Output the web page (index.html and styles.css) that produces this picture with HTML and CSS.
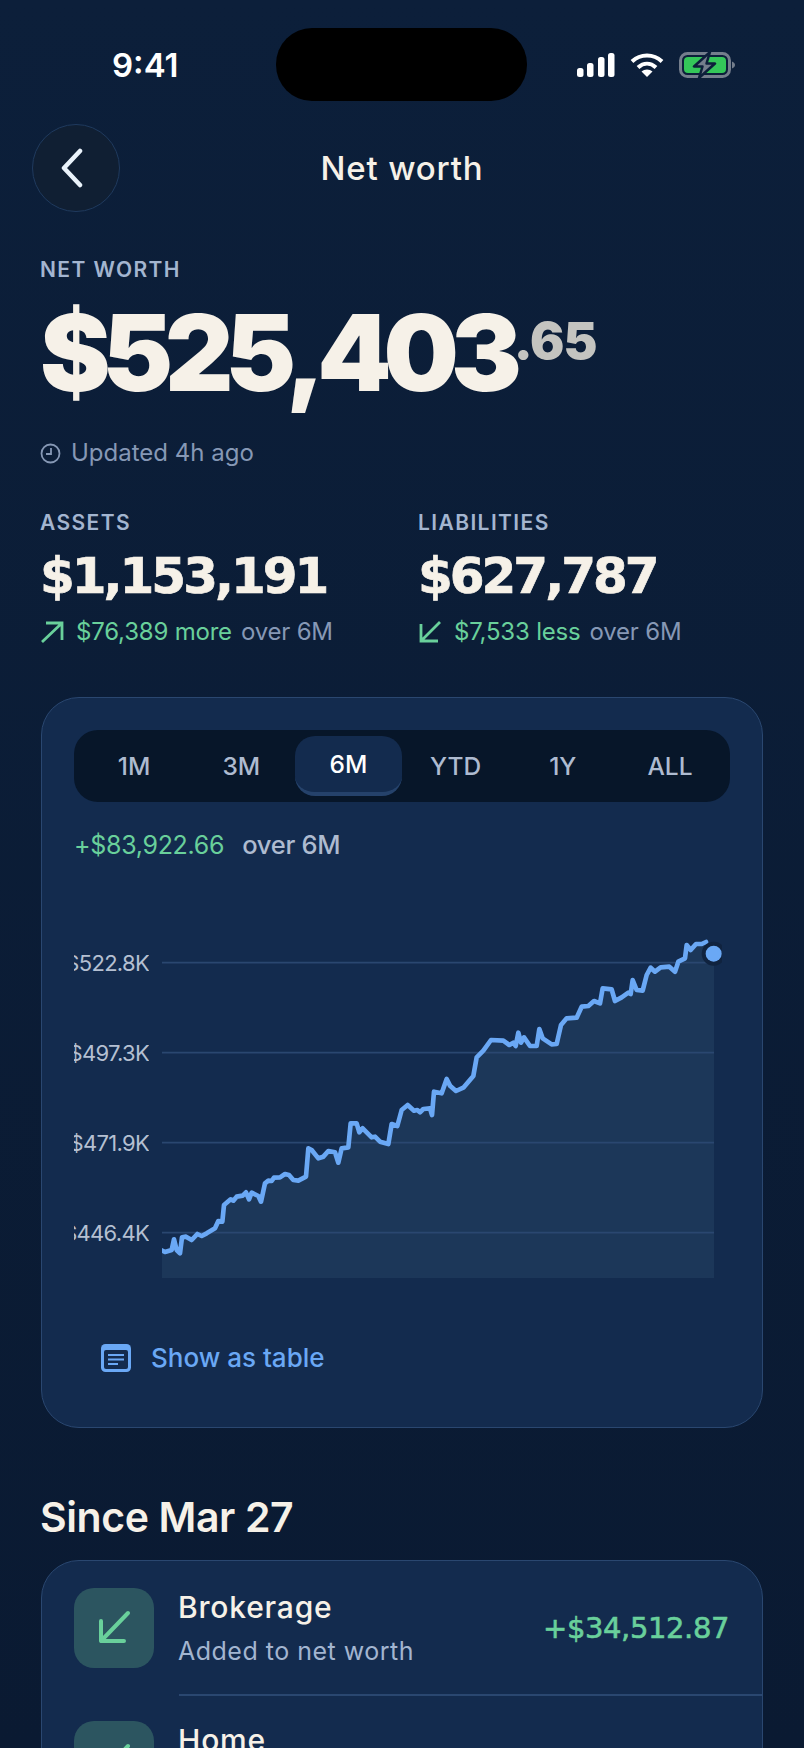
FILE: index.html
```html
<!DOCTYPE html>
<html lang="en">
<head>
    <meta charset="UTF-8">
    <meta name="viewport" content="width=device-width, initial-scale=1.0">
    <title>Net worth</title>
    <link rel="stylesheet" href="styles.css">
</head>
<body>
    <div class="status-bar">
        <div class="status-time">9:41</div>
        <div class="island"></div>
        <div class="status-icons">
            <svg width="38" height="24" viewBox="0 0 38 24">
                <rect x="0" y="15" width="6.5" height="9" rx="2.5" fill="#fff"/>
                <rect x="10" y="10" width="6.5" height="14" rx="2.5" fill="#fff"/>
                <rect x="21" y="4" width="6.5" height="20" rx="2.5" fill="#fff"/>
                <rect x="31" y="0" width="6.5" height="24" rx="2.5" fill="#fff"/>
            </svg>
            <svg width="34" height="24" viewBox="0 0 34 24">
                <path d="M2 8.5C10.500 0.500 23.500 0.500 32 8.500" fill="none" stroke="#fff" stroke-width="4"/>
                <path d="M8 14.500C13.500 9.500 20.500 9.500 26 14.500" fill="none" stroke="#fff" stroke-width="4"/>
                <path d="M17 24L11.500 18.500C14.500 15.800 19.500 15.800 22.500 18.500Z" fill="#fff"/>
            </svg>
            <svg width="56" height="26" viewBox="0 0 56 26">
                <rect x="1.500" y="1.500" width="49" height="23" rx="7" fill="none" stroke="#747e8c" stroke-width="3"/>
                <rect x="5" y="5" width="42" height="16" rx="4" fill="#34c759"/>
                <path d="M53 9.500c2 .8 3 2 3 3.500s-1 2.700-3 3.500z" fill="#747e8c"/>
                <path d="M31 0L15 14.500h8.500L20 26l16-14.500h-8.500z" fill="#747e8c" stroke="#0c1f3a" stroke-width="2.500" stroke-linejoin="round"/>
            </svg>
        </div>
    </div>

    <header class="nav">
        <button class="back-btn">
            <svg width="26" height="40" viewBox="0 0 26 40">
                <path d="M21 3L5 20l16 17" fill="none" stroke="#eaf3fb" stroke-width="4.500" stroke-linecap="round" stroke-linejoin="round"/>
            </svg>
        </button>
        <div class="nav-title">Net worth</div>
    </header>

    <section class="summary">
        <div class="label">NET WORTH</div>
        <div class="total">$525,403<span class="cents">.65</span></div>
        <div class="updated">
            <svg width="21" height="21" viewBox="0 0 21 21">
                <circle cx="10.500" cy="10.500" r="9" fill="none" stroke="#8698b5" stroke-width="1.800"/>
                <path d="M11 5v6H6" fill="none" stroke="#8698b5" stroke-width="1.800"/>
            </svg>
            Updated 4h ago
        </div>
        <div class="split">
            <div class="split-col">
                <div class="label">ASSETS</div>
                <div class="split-value">$1,153,191</div>
                <div class="delta">
                    <svg width="24" height="22" viewBox="0 0 24 22">
                        <path d="M2 21L22 2M6 2h16v17" fill="none" stroke="#69d09b" stroke-width="2.800"/>
                    </svg>
                    <span class="pos">$76,389 more</span>
                    <span class="muted">over 6M</span>
                </div>
            </div>
            <div class="split-col">
                <div class="label">LIABILITIES</div>
                <div class="split-value">$627,787</div>
                <div class="delta">
                    <svg width="24" height="22" viewBox="0 0 24 22">
                        <path d="M22 1L3 20M3 3v17h17" fill="none" stroke="#69d09b" stroke-width="2.800"/>
                    </svg>
                    <span class="pos">$7,533 less</span>
                    <span class="muted">over 6M</span>
                </div>
            </div>
        </div>
    </section>

    <section class="card chart-card">
        <div class="ranges">
            <div class="range">1M</div>
            <div class="range">3M</div>
            <div class="range active">6M</div>
            <div class="range">YTD</div>
            <div class="range">1Y</div>
            <div class="range">ALL</div>
        </div>
        <div class="change"><span class="pos">+$83,922.66</span><span class="change-note">over 6M</span></div>
        <div class="chart">
            <div class="axis">
                <div class="tick">$522.8K</div>
                <div class="tick">$497.3K</div>
                <div class="tick">$471.9K</div>
                <div class="tick">$446.4K</div>
            </div>
            <svg class="plot" width="560" height="360" viewBox="306 -6 1680 1080">
                <path fill="#1c3759" d="M306 992L315 996L335 990L342 958L350 990L360 1000L366 952L378 950L395 960L412 942L425 948L440 940L465 925L475 903L487 905L492 855L512 838L520 842L530 830L548 827L558 817L567 838L575 818L595 828L603 845L615 790L625 782L635 783L642 773L660 772L675 762L687 765L700 780L715 782L738 770L745 685L755 690L775 715L790 710L805 693L825 697L835 728L845 685L865 682L872 610L890 610L898 637L908 625L935 652L945 650L960 665L985 672L995 612L1012 618L1025 570L1043 555L1062 572L1072 570L1080 577L1090 567L1110 565L1116 585L1122 515L1145 520L1160 477L1170 497L1188 513L1210 503L1240 468L1250 412L1270 392L1293 360L1330 362L1348 375L1360 368L1367 378L1375 338L1383 368L1392 352L1410 378L1430 378L1438 327L1448 355L1475 373L1490 372L1503 315L1520 295L1550 293L1565 260L1585 258L1602 243L1620 250L1628 205L1655 208L1665 243L1685 232L1705 218L1712 222L1718 180L1730 210L1748 212L1760 165L1772 143L1785 155L1802 142L1828 140L1845 155L1855 125L1875 115L1880 75L1892 90L1908 72L1925 72L1938 66L1962 101V1074H306Z"/>
                <g class="grid">
                    <path d="M306 128H1962"/>
                    <path d="M306 398H1962"/>
                    <path d="M306 668H1962"/>
                    <path d="M306 938H1962"/>
                </g>
                <path class="line" d="M303 990L315 996L335 990L342 958L350 990L360 1000L366 952L378 950L395 960L412 942L425 948L440 940L465 925L475 903L487 905L492 855L512 838L520 842L530 830L548 827L558 817L567 838L575 818L595 828L603 845L615 790L625 782L635 783L642 773L660 772L675 762L687 765L700 780L715 782L738 770L745 685L755 690L775 715L790 710L805 693L825 697L835 728L845 685L865 682L872 610L890 610L898 637L908 625L935 652L945 650L960 665L985 672L995 612L1012 618L1025 570L1043 555L1062 572L1072 570L1080 577L1090 567L1110 565L1116 585L1122 515L1145 520L1160 477L1170 497L1188 513L1210 503L1240 468L1250 412L1270 392L1293 360L1330 362L1348 375L1360 368L1367 378L1375 338L1383 368L1392 352L1410 378L1430 378L1438 327L1448 355L1475 373L1490 372L1503 315L1520 295L1550 293L1565 260L1585 258L1602 243L1620 250L1628 205L1655 208L1665 243L1685 232L1705 218L1712 222L1718 180L1730 210L1748 212L1760 165L1772 143L1785 155L1802 142L1828 140L1845 155L1855 125L1875 115L1880 75L1892 90L1908 72L1925 72L1938 66"/>
                <circle cx="1961" cy="101" r="36" fill="#10233f"/>
                <circle cx="1961" cy="101" r="24" fill="#6aa8f5"/>
            </svg>
        </div>
        <div class="table-link">
            <svg width="30" height="28" viewBox="0 0 30 28">
                <rect x="0" y="0" width="30" height="28" rx="4.500" fill="#6aa8f5"/>
                <rect x="3" y="6" width="24" height="19" rx="2" fill="#132b4e"/>
                <path d="M7 11h16M7 15.500h16M7 20h10" stroke="#6aa8f5" stroke-width="2"/>
            </svg>
            Show as table
        </div>
    </section>

    <h2 class="section-title">Since Mar 27</h2>

    <section class="card list-card">
        <div class="row">
            <div class="tile">
                <svg width="36" height="36" viewBox="0 0 36 36">
                    <path d="M32 3L5 31M5 11v20h23" fill="none" stroke="#69d09b" stroke-width="4" stroke-linecap="round" stroke-linejoin="round"/>
                </svg>
            </div>
            <div class="row-text">
                <div class="row-name">Brokerage</div>
                <div class="row-sub">Added to net worth</div>
            </div>
            <div class="row-amount">+$34,512.87</div>
        </div>
        <div class="row">
            <div class="tile">
                <svg width="36" height="36" viewBox="0 0 36 36">
                    <path d="M32 3L5 31M5 11v20h23" fill="none" stroke="#69d09b" stroke-width="4" stroke-linecap="round" stroke-linejoin="round"/>
                </svg>
            </div>
            <div class="row-text">
                <div class="row-name">Home</div>
                <div class="row-sub">Added to net worth</div>
            </div>
            <div class="row-amount">+$49,409.79</div>
        </div>
    </section>
</body>
</html>
```

FILE: styles.css
```css
* {
    box-sizing: border-box;
}
html, body {
    margin: 0;
    height: 1748px;
    overflow: hidden;
}
body {
    font-family: Inter, 'Noto Sans', sans-serif;
    background: linear-gradient(#0c1f3a, #0a1a32);
    color: #f6f1e8;
}

/* status bar */
.status-bar {
    display: grid;
    grid-template-columns: 276px 251px 1fr;
    padding-top: 28px;
    height: 101px;
}
.status-time {
    padding-left: 112px;
    font-size: 33px;
    font-weight: 600;
    line-height: 74px;
    color: #fff;
}
.island {
    height: 73px;
    background: #000;
    border-radius: 36px;
}
.status-icons {
    display: flex;
    align-items: center;
    gap: 15px;
    padding-left: 50px;
}

/* nav */
.nav {
    display: grid;
    grid-template-columns: 88px 1fr 88px;
    align-items: center;
    margin-top: 23px;
    padding: 0 32px;
}
.back-btn {
    width: 88px;
    height: 88px;
    padding: 0 8px 0 0;
    display: flex;
    align-items: center;
    justify-content: center;
    background: #101f33;
    border: 1.5px solid #1f3a5e;
    border-radius: 50%;
}
.nav-title {
    text-align: center;
    font-size: 33px;
    font-weight: 500;
    letter-spacing: 0.800px;
}

/* summary */
.summary {
    padding: 0 40px;
    margin-top: 46px;
}
.label {
    font-size: 21px;
    font-weight: 600;
    letter-spacing: 1.400px;
    line-height: 24px;
    color: #a3b5d0;
}
.total {
    margin-top: 15px;
    font-size: 106px;
    font-weight: 900;
    letter-spacing: -8.100px;
    line-height: 112px;
    white-space: nowrap;
}
.cents {
    font-size: 51px;
    letter-spacing: -1px;
    vertical-align: 32px;
    line-height: 0;
    color: #c4c4c0;
}
.updated {
    display: flex;
    align-items: center;
    gap: 10px;
    margin-top: 28px;
    font-size: 24px;
    line-height: 32px;
    color: #8698b5;
}
.split {
    display: grid;
    grid-template-columns: 378px 1fr;
    margin-top: 42px;
}
.split-value {
    margin-top: 12px;
    font-family: 'DejaVu Sans', sans-serif;
    font-size: 50px;
    font-weight: 700;
    letter-spacing: -3px;
    line-height: 58px;
    white-space: nowrap;
    -webkit-text-stroke: 0.700px #f6f1e8;
}
.delta {
    display: flex;
    align-items: center;
    gap: 9px;
    margin-top: 11px;
    font-size: 24px;
    letter-spacing: -0.200px;
    line-height: 32px;
    white-space: nowrap;
}
.delta svg {
    margin-right: 3px;
}
.pos {
    color: #69d09b;
}
.muted {
    color: #8698b5;
}

/* cards */
.card {
    width: 722px;
    margin-left: 41px;
    background: #132b4e;
    border: 1.5px solid #2a4770;
}
.chart-card {
    margin-top: 48.500px;
    padding: 32px 32px 53px;
    border-radius: 38px;
}
.ranges {
    display: flex;
    padding: 6px 6.500px;
    height: 72px;
    background: #071629;
    border-radius: 24px;
}
.range {
    flex: 1;
    display: flex;
    align-items: center;
    justify-content: center;
    font-size: 24.500px;
    font-weight: 500;
    color: #aebbd0;
}
.range.active {
    color: #fff;
    background: #132b4e;
    border-radius: 20px;
    border-bottom: 4px solid #25426b;
}
.change {
    display: flex;
    gap: 18px;
    margin-top: 27px;
    font-size: 25px;
    letter-spacing: -0.300px;
    line-height: 32px;
}
.change-note {
    font-size: 25.500px;
    font-weight: 500;
    color: #aebbd0;
}
.chart {
    display: flex;
    gap: 13px;
    margin-top: 57px;
}
.axis {
    width: 75px;
    overflow: hidden;
    display: flex;
    flex-direction: column;
    align-items: flex-end;
}
.tick {
    height: 90px;
    line-height: 90px;
    font-size: 22px;
    letter-spacing: -0.700px;
    color: #b5c0d2;
    white-space: nowrap;
}
.plot {
    display: block;
    flex: none;
}
.grid path {
    stroke: #2a4770;
    stroke-width: 5;
}
.line {
    fill: none;
    stroke: #6aa8f5;
    stroke-width: 14;
    stroke-linejoin: round;
    stroke-linecap: round;
}
.table-link {
    display: flex;
    align-items: center;
    gap: 20px;
    margin-top: 64px;
    padding-left: 27px;
    font-size: 26px;
    font-weight: 500;
    line-height: 32px;
    color: #6aa8f5;
}

/* list */
.section-title {
    margin: 64px 0 0 40px;
    font-size: 41px;
    font-weight: 600;
    letter-spacing: -0.400px;
    line-height: 50px;
}
.list-card {
    margin-top: 18.500px;
    border-radius: 38px 38px 0 0;
}
.row {
    display: flex;
    align-items: center;
    height: 133px;
    padding: 0 33px 0 32px;
    position: relative;
}
.row + .row::before {
    content: "";
    position: absolute;
    top: 0;
    left: 137px;
    right: 0;
    border-top: 2px solid #2a4770;
}
.tile {
    flex: none;
    display: flex;
    align-items: center;
    justify-content: center;
    width: 80px;
    height: 80px;
    background: #2c5560;
    border-radius: 20px;
}
.row-text {
    flex: 1;
    margin-left: 24px;
}
.row-name {
    font-size: 30px;
    font-weight: 500;
    letter-spacing: 0.800px;
    line-height: 40px;
}
.row-sub {
    margin-top: 7px;
    font-size: 25px;
    letter-spacing: 0.500px;
    line-height: 34px;
    color: #a3b5d0;
}
.row-amount {
    font-family: 'DejaVu Sans', sans-serif;
    font-size: 29px;
    letter-spacing: -0.400px;
    color: #69d09b;
    -webkit-text-stroke: 0.600px #69d09b;
}
```
